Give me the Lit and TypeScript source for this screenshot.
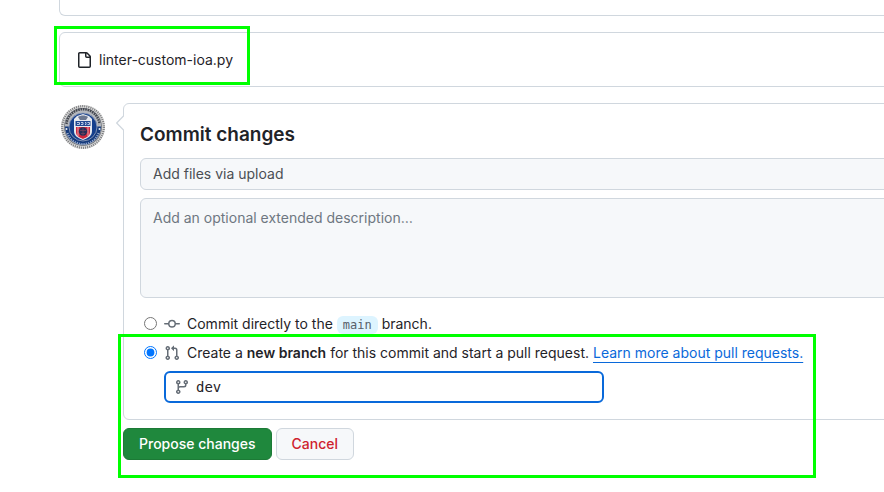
import { LitElement, html, css, svg } from "lit";
import { customElement, state } from "lit/decorators.js";

const icon = (path: string, cls = "") => html`
  <svg class="icon ${cls}" viewBox="0 0 16 16" width="16" height="16" aria-hidden="true">
    <path d=${path}></path>
  </svg>`;

const FILE =
  "M2 1.75C2 .784 2.784 0 3.75 0h6.586c.464 0 .909.184 1.237.513l2.914 2.914c.329.328.513.773.513 1.237v9.586A1.75 1.75 0 0 1 13.25 16h-9.5A1.75 1.75 0 0 1 2 14.25Zm1.75-.25a.25.25 0 0 0-.25.25v12.5c0 .138.112.25.25.25h9.5a.25.25 0 0 0 .25-.25V6h-2.75A1.75 1.75 0 0 1 9 4.25V1.5Zm6.75.062V4.25c0 .138.112.25.25.25h2.688l-.011-.013-2.914-2.914-.013-.011Z";
const COMMIT =
  "M11.93 8.5a4.002 4.002 0 0 1-7.86 0H.75a.75.75 0 0 1 0-1.5h3.32a4.002 4.002 0 0 1 7.86 0h3.32a.75.75 0 0 1 0 1.5Zm-1.43-.75a2.5 2.5 0 1 0-5 0 2.5 2.5 0 0 0 5 0Z";
const PULL =
  "M1.5 3.25a2.25 2.25 0 1 1 3 2.122v5.256a2.251 2.251 0 1 1-1.5 0V5.372A2.25 2.25 0 0 1 1.5 3.25Zm5.677-.177L9.573.677A.25.25 0 0 1 10 .854V2.5h1A2.5 2.5 0 0 1 13.5 5v5.628a2.251 2.251 0 1 1-1.5 0V5a1 1 0 0 0-1-1h-1v1.646a.25.25 0 0 1-.427.177L7.177 3.427a.25.25 0 0 1 0-.354ZM3.75 2.5a.75.75 0 1 0 0 1.5.75.75 0 0 0 0-1.5Zm0 9.5a.75.75 0 1 0 0 1.5.75.75 0 0 0 0-1.5Zm8.25.75a.75.75 0 1 0 1.5 0 .75.75 0 0 0-1.5 0Z";
const BRANCH =
  "M9.5 3.25a2.25 2.25 0 1 1 3 2.122V6A2.5 2.5 0 0 1 10 8.5H6a1 1 0 0 0-1 1v1.128a2.251 2.251 0 1 1-1.5 0V5.372a2.25 2.25 0 1 1 1.5 0v1.836A2.493 2.493 0 0 1 6 7h4a1 1 0 0 0 1-1v-.628A2.25 2.25 0 0 1 9.5 3.25Zm-6 0a.75.75 0 1 0 1.5 0 .75.75 0 0 0-1.5 0Zm8.25-.75a.75.75 0 1 0 0 1.5.75.75 0 0 0 0-1.5ZM4.25 12a.75.75 0 1 0 0 1.5.75.75 0 0 0 0-1.5Z";

@customElement("user-seal")
class UserSeal extends LitElement {
  static styles = css`
    :host { display: block; }
    svg { display: block; }
  `;

  render() {
    return html`
      <svg viewBox="0 0 44 44" width="44" height="44" role="img" aria-label="Profile picture">
        ${svg`
          <circle cx="22" cy="22" r="22" fill="#d6d6d6"/>
          <circle cx="22" cy="22" r="20.8" fill="none" stroke="#77787a" stroke-width="2.2" stroke-dasharray=".9 1.2"/>
          <circle cx="22" cy="22" r="19" fill="#6f747d"/>
          <circle cx="22" cy="22" r="18.200" fill="#b4b7bc"/>
          <path d="M5.500 19a16.600 16.600 0 0 1 33 0" fill="none" stroke="#44474f" stroke-width="2.400" stroke-dasharray="1.6 .8"/>
          <path d="M4 21.500a18 18 0 0 0 36 0z" fill="#153a7c"/>
          <path d="M6.500 28a16.400 16.400 0 0 0 31 0" fill="none" stroke="#8fa3c8" stroke-width="2" stroke-dasharray="1.300 1"/>
          <circle cx="22" cy="22" r="14" fill="#153f8c" stroke="#9aa5ba" stroke-width=".8"/>
          <path d="M13 14l3-3 6-2 6 2 3 3v12c0 5-4 7-9 9-5-2-9-4-9-9z" fill="#e6e9ef"/>
          <path d="M17 12c3-2 7-2 10 0l-2 3h-6z" fill="#6c7890"/>
          <path d="M14.500 16h15v5h-15z" fill="#234a92"/>
          <path d="M16 17.500h2.500v2H16m4-2h2v2h-2m4-2h1v2h-1m2.500-2h2v2h-2" fill="none" stroke="#dce5f5" stroke-width=".8"/>
          <path d="M15 22h14v5c0 4-3 5-7 7-4-2-7-3-7-7z" fill="#d0263c"/>
          <path d="M17 22v9M27 22v9" stroke="#ecc9ce" stroke-width=".8"/>
          <circle cx="22" cy="26.500" r="4.200" fill="#252e58"/>
          <path d="M19 25.500h6M20 28.500h4M22 23v8" stroke="#75405c" stroke-width=".8"/>
          <circle cx="5.500" cy="24" r="1" fill="#e8edf5"/>
          <circle cx="38.500" cy="24" r="1" fill="#e8edf5"/>
        `}
      </svg>`;
  }
}

@customElement("app-root")
class AppRoot extends LitElement {
  @state() private target = "branch";

  static styles = css`
    :host {
      display: block;
      overflow: hidden;
      min-height: 100vh;
      background: #fff;
      color: #1f2328;
      font: 14px/21px Inter, "Liberation Sans", sans-serif;
    }
    * { box-sizing: border-box; }
    .page {
      display: flex;
      flex-direction: column;
      gap: 16px;
      padding-left: 59px;
      margin-right: -24px;
    }
    .panel { border: 1px solid #d0d7de; border-radius: 6px; }
    .dropzone { height: 16px; border-top: 0; border-radius: 0 0 6px 6px; }
    .file {
      position: relative;
      display: flex;
      align-items: center;
      gap: 7px;
      padding: 16px;
      min-height: 55px;
    }
    .icon { flex: none; fill: currentColor; }
    .muted { color: #656d76; }
    .highlight {
      position: absolute;
      border: 3px solid #00ff00;
      pointer-events: none;
    }
    .file .highlight { inset: -7px auto 1px -6px; width: 196px; }
    .commit { display: grid; grid-template-columns: 64px minmax(0, 1fr); }
    .seal { padding: 2px; }
    .form { position: relative; }
    .form .highlight { top: 231px; bottom: -18px; left: -5px; width: 698px; }
    .box { position: relative; padding: 16px; }
    .notch { position: absolute; top: 11px; left: -8px; }
    h2 {
      margin: 0 0 8px;
      font-size: 19px;
      line-height: 30px;
      font-weight: 600;
    }
    .field {
      display: block;
      width: 100%;
      margin: 0 0 8px;
      padding: 5px 12px;
      border: 1px solid #d0d7de;
      border-radius: 6px;
      background: #f6f8fa;
      color: #4b4f54;
      font: inherit;
      line-height: 20px;
      outline: none;
    }
    .field.summary { height: 32px; padding: 4px 12px 6px; }
    .field.description { height: 100px; padding-top: 9px; resize: none; margin-bottom: 15px; }
    .field::placeholder { color: #6e7781; opacity: 1; }
    .choice {
      display: flex;
      align-items: center;
      margin-bottom: 8px;
      white-space: nowrap;
    }
    .choice input { flex: none; width: 13px; height: 13px; margin: 0 7px 0 4px; }
    .choice label { display: flex; align-items: center; gap: 7px; }
    code {
      padding: 2px 6px;
      border-radius: 6px;
      background: #ddf4ff;
      color: #57606a;
      font: 12px "DejaVu Sans Mono", monospace;
    }
    b { font-weight: 600; }
    a { color: #0969da; text-decoration: underline; text-underline-offset: 4px; }
    .branch {
      display: flex;
      align-items: center;
      gap: 6px;
      max-width: 440px;
      height: 32px;
      margin-left: 24px;
      padding: 0 8px;
      border: 2px solid #0969da;
      border-radius: 6px;
    }
    .branch input {
      flex: 1;
      min-width: 0;
      padding: 0;
      border: 0;
      outline: 0;
      background: none;
      color: #1f2328;
      font: 14px/20px "DejaVu Sans Mono", monospace;
    }
    .actions { display: flex; gap: 4px; margin-top: 8px; }
    button {
      height: 32px;
      padding: 0 15px;
      border: 1px solid #d0d7de;
      border-radius: 6px;
      background: #f6f8fa;
      color: #cf222e;
      font: 500 14px/20px Inter, "Liberation Sans", sans-serif;
    }
    .primary { border-color: #1c7a36; background: #1f883d; color: #fff; }
  `;

  private pick(e: Event) {
    this.target = (e.target as HTMLInputElement).value;
  }

  render() {
    return html`
      <main class="page">
        <section class="panel dropzone"></section>

        <section class="panel file">
          ${icon(FILE)}
          <span>linter-custom-ioa.py</span>
          <div class="highlight"></div>
        </section>

        <section class="commit">
          <user-seal class="seal"></user-seal>
          <form class="form" @submit=${(e: Event) => e.preventDefault()}>
            <div class="panel box">
              <svg class="notch" width="9" height="16" viewBox="0 0 9 16" aria-hidden="true">
                <path d="M8 0v1L1 8l7 7v1h1V0z" fill="#fff"></path>
                <path d="M7.500 1L.7 8l6.800 7" fill="none" stroke="#d0d7de" stroke-width="1.200"></path>
              </svg>
              <h2>Commit changes</h2>
              <input class="field summary" aria-label="Commit message" value="Add files via upload" />
              <textarea
                class="field description"
                aria-label="Description"
                placeholder="Add an optional extended description…"
              ></textarea>

              <div class="choice">
                <input id="direct" type="radio" name="target" value="direct"
                  .checked=${this.target === "direct"} @change=${this.pick} />
                <label for="direct">
                  ${icon(COMMIT, "muted")}
                  <span>Commit directly to the <code>main</code> branch.</span>
                </label>
              </div>
              <div class="choice">
                <input id="branch" type="radio" name="target" value="branch"
                  .checked=${this.target === "branch"} @change=${this.pick} />
                <label for="branch">
                  ${icon(PULL, "muted")}
                  <span>Create a <b>new branch</b> for this commit and start a pull request.
                    <a href="#pull-requests">Learn more about pull requests.</a></span>
                </label>
              </div>
              <div class="branch">
                ${icon(BRANCH, "muted")}
                <input aria-label="New branch name" value="dev" />
              </div>
            </div>
            <div class="actions">
              <button class="primary" type="submit">Propose changes</button>
              <button type="button">Cancel</button>
            </div>
            <div class="highlight"></div>
          </form>
        </section>
      </main>`;
  }
}
